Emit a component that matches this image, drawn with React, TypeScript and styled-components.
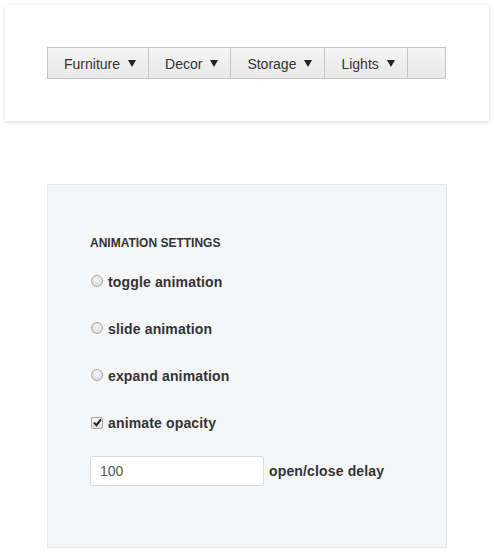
import React from "react";
import styled, { createGlobalStyle } from "styled-components";

const Global = createGlobalStyle`
  html, body { margin: 0; padding: 0; background: #ffffff; }
  body { font-family: "Liberation Sans", Arial, sans-serif; color: #333; }
`;

const Page = styled.div`
  display: flex;
  flex-direction: column;
  padding: 5px 6px 0 5px;
`;

const Card = styled.div`
  background: #fff;
  box-shadow: 0 1px 4px rgba(0, 0, 0, 0.16);
  padding: 42px 43px 42px 42px;
  display: flex;
`;

const Menu = styled.ul`
  display: flex;
  list-style: none;
  margin: 0;
  padding: 0;
  width: 400px;
  height: 32px;
  box-sizing: border-box;
  border: 1px solid #c5c5c5;
  background: linear-gradient(#f5f5f5, #e8e8e8);
`;

const MenuItem = styled.li<{ $empty?: boolean }>`
  display: flex;
  align-items: center;
  gap: 8px;
  padding: 1px 12px 0 16px;
  font-size: 14px;
  color: #333;
  border-right: ${(p) => (p.$empty ? "none" : "1px solid #c5c5c5")};
  flex: ${(p) => (p.$empty ? "1" : "none")};
`;

const Arrow = styled.span`
  width: 0;
  height: 0;
  border-left: 4px solid transparent;
  border-right: 4px solid transparent;
  border-top: 7px solid #222;
  margin-bottom: 1px;
`;

const Panel = styled.div`
  margin: 63px 0 0 42px;
  width: 400px;
  box-sizing: border-box;
  background: #f5f6f8;
  border: 1px solid #e6e7ea;
  padding: 51px 42px 61px 42px;
  display: flex;
  flex-direction: column;
`;

const Title = styled.div`
  font-size: 12px;
  font-weight: bold;
  line-height: 14px;
  height: 14px;
  text-transform: uppercase;
  color: #333;
  margin-bottom: 24px;
`;

const Option = styled.label`
  display: flex;
  align-items: center;
  gap: 5px;
  height: 17px;
  line-height: 17px;
  font-size: 14px;
  font-weight: bold;
  letter-spacing: 0.15px;
  color: #333;
  margin-bottom: 30px;
  &:last-of-type {
    margin-bottom: 24px;
  }
`;

const Radio = styled.span`
  width: 10px;
  height: 10px;
  border-radius: 50%;
  margin: 0 0 3px 1px;
  border: 1px solid #a8a8a8;
  background: radial-gradient(circle at 50% 35%, #f4f4f4 0%, #dcdcdc 80%);
  box-sizing: content-box;
  flex: none;
`;

const Check = styled.span`
  width: 10px;
  height: 10px;
  margin: 0 0 2px 1px;
  border-radius: 2px;
  border: 1px solid #a8a8a8;
  background: linear-gradient(#f6f6f6, #dedede);
  display: flex;
  align-items: center;
  justify-content: center;
  flex: none;
`;

const InputRow = styled.div`
  display: flex;
  align-items: center;
  gap: 5px;
`;

const Field = styled.input`
  width: 174px;
  height: 30px;
  box-sizing: border-box;
  border: 1px solid #dcdcdc;
  border-radius: 2px;
  background: #fff;
  padding: 0 9px;
  font-family: "Liberation Sans", Arial, sans-serif;
  font-size: 14px;
  color: #555;
  outline: none;
`;

const FieldLabel = styled.span`
  font-size: 14px;
  font-weight: bold;
  letter-spacing: 0.15px;
  color: #333;
`;

const items = ["Furniture", "Decor", "Storage", "Lights"];

export default function App() {
  return (
    <Page>
      <Global />
      <Card>
        <Menu>
          {items.map((t) => (
            <MenuItem key={t}>
              {t}
              <Arrow />
            </MenuItem>
          ))}
          <MenuItem $empty />
        </Menu>
      </Card>
      <Panel>
        <Title>Animation settings</Title>
        <Option>
          <Radio />
          toggle animation
        </Option>
        <Option>
          <Radio />
          slide animation
        </Option>
        <Option>
          <Radio />
          expand animation
        </Option>
        <Option>
          <Check>
            <svg width="9" height="9" viewBox="0 0 9 9">
              <path d="M1 4.6 L3.4 7.2 L8 1.3" fill="none" stroke="#222" strokeWidth="2" />
            </svg>
          </Check>
          animate opacity
        </Option>
        <InputRow>
          <Field defaultValue="100" />
          <FieldLabel>open/close delay</FieldLabel>
        </InputRow>
      </Panel>
    </Page>
  );
}
